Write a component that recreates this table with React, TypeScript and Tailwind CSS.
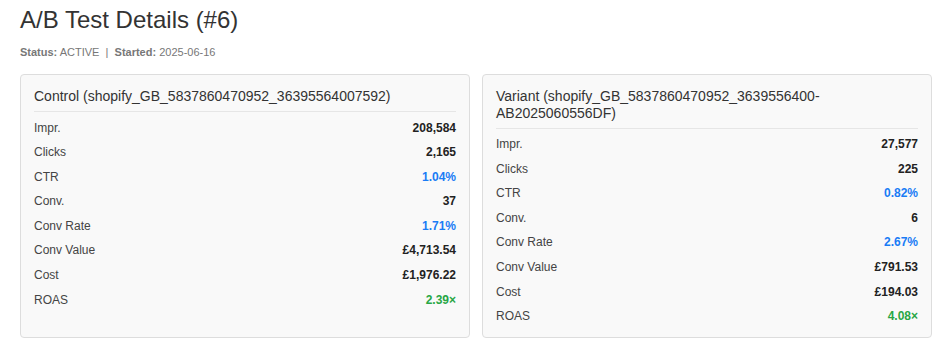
import React from "react";

interface Metric {
    label: string;
    value: string;
    tone?: "blue" | "green";
}

interface Arm {
    title: string;
    metrics: Metric[];
}

const arms: Arm[] = [
    {
        title: "Control (shopify_GB_5837860470952_36395564007592)",
        metrics: [
            { label: "Impr.", value: "208,584" },
            { label: "Clicks", value: "2,165" },
            { label: "CTR", value: "1.04%", tone: "blue" },
            { label: "Conv.", value: "37" },
            { label: "Conv Rate", value: "1.71%", tone: "blue" },
            { label: "Conv Value", value: "£4,713.54" },
            { label: "Cost", value: "£1,976.22" },
            { label: "ROAS", value: "2.39×", tone: "green" },
        ],
    },
    {
        title: "Variant (shopify_GB_5837860470952_3639556400-AB2025060556DF)",
        metrics: [
            { label: "Impr.", value: "27,577" },
            { label: "Clicks", value: "225" },
            { label: "CTR", value: "0.82%", tone: "blue" },
            { label: "Conv.", value: "6" },
            { label: "Conv Rate", value: "2.67%", tone: "blue" },
            { label: "Conv Value", value: "£791.53" },
            { label: "Cost", value: "£194.03" },
            { label: "ROAS", value: "4.08×", tone: "green" },
        ],
    },
];

const toneClass = (tone?: string) => {
    if (tone === "blue") return "text-[#1a7cf5]";
    if (tone === "green") return "text-[#28a745]";
    return "text-[#222]";
};

const ArmCard = ({ arm }: { arm: Arm }) => {
    return (
        <div className="bg-[#f9f9f9] border border-[#ddd] rounded-[4px] px-[13px] pt-[13px] pb-[8px]">
            <h3 className="text-[14px] leading-[16.5px] text-[#333] pb-[6.5px] border-b border-[#e6e6e6] break-words">
                {arm.title}
            </h3>
            <div className="pt-[3.5px]">
                {arm.metrics.map((m) => (
                    <div
                        key={m.label}
                        className="flex justify-between items-center text-[12px] leading-[14.6px] py-[5px]"
                    >
                        <span className="text-[#444]">{m.label}</span>
                        <span className={`font-bold ${toneClass(m.tone)}`}>{m.value}</span>
                    </div>
                ))}
            </div>
        </div>
    );
};

const App = () => {
    return (
        <div className="bg-white min-h-screen px-[20px] pt-[5px] font-['Liberation_Sans',Arial,sans-serif]">
            <h1 className="text-[24px] leading-[29px] text-[#333]">A/B Test Details (#6)</h1>
            <p className="text-[11px] leading-[13px] text-[#777] mt-[12px]">
                <b>Status:</b> ACTIVE &nbsp;|&nbsp; <b>Started:</b> 2025-06-16
            </p>
            <div className="grid grid-cols-2 gap-[12px] mt-[15px] w-[912px]">
                {arms.map((arm) => (
                    <ArmCard key={arm.title} arm={arm} />
                ))}
            </div>
        </div>
    );
};

export default App;
